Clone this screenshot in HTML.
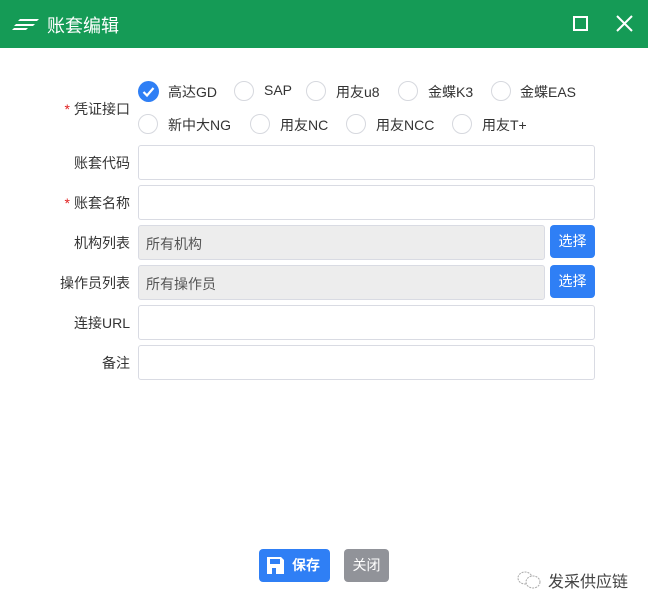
<!DOCTYPE html>
<html><head><meta charset="utf-8"><style>
*{box-sizing:border-box;margin:0;padding:0}
body{width:648px;height:607px;background:#fff;font-family:"Liberation Sans","Noto Sans CJK SC",sans-serif;font-size:14px;color:#333;position:relative;overflow:hidden}
.hd{position:absolute;left:0;top:0;width:648px;height:48px;background:#159b56;color:#fff}
.hd .t{position:absolute;left:47px;top:12px;font-size:18px}
.a{position:absolute}
.lbl{position:absolute;right:518px;width:120px;text-align:right;font-size:14px;color:#333}
.star{color:#e02020;margin-right:4px}
.in{position:absolute;left:138px;width:457px;height:35px;border:1px solid #d9dbe3;border-radius:3px;background:#fff}
.g{width:407px;background:#ededed;color:#555;padding:8px 7px}
.sel{position:absolute;left:550px;width:45px;height:33px;background:#2f7ff5;color:#fff;border-radius:4px;text-align:center;line-height:33px;font-size:14px}
.r{position:absolute;width:20px;height:20px;border:1px solid #d6d8de;border-radius:50%}
.rl{position:absolute;font-size:14px;color:#333}
</style></head><body>
<div class="hd">
<svg class="a" style="left:12px;top:17px" width="28" height="14" viewBox="0 0 28 14"><path d="M8 2 L27 2 L25 4 L6 4Z M4 7 L23 7 L21 9 L2 9Z M2 11 L16 11 L14 13 L0 13Z" fill="#fff"/></svg>
<div class="t">账套编辑</div>
<div class="a" style="left:573px;top:16px;width:15px;height:15px;border:2px solid #fff"></div>
<svg class="a" style="left:616px;top:15px" width="17" height="17"><path d="M1 1L16 16M16 1L1 16" stroke="#fff" stroke-width="2"/></svg>
</div>

<div class="lbl" style="top:99px"><span class="star">*</span>凭证接口</div>
<svg class="a" style="left:138px;top:81px" width="21" height="21"><circle cx="10.5" cy="10.5" r="10.5" fill="#2f7ff5"/><path d="M5.5 11 L9 14.5 L15.5 7" stroke="#fff" stroke-width="2.2" fill="none"/></svg>
<div class="rl" style="left:168px;top:82px">高达GD</div>
<div class="r" style="left:234px;top:81px"></div><div class="rl" style="left:264px;top:82px">SAP</div>
<div class="r" style="left:306px;top:81px"></div><div class="rl" style="left:336px;top:82px">用友u8</div>
<div class="r" style="left:398px;top:81px"></div><div class="rl" style="left:428px;top:82px">金蝶K3</div>
<div class="r" style="left:491px;top:81px"></div><div class="rl" style="left:520px;top:82px">金蝶EAS</div>
<div class="r" style="left:138px;top:114px"></div><div class="rl" style="left:168px;top:115px">新中大NG</div>
<div class="r" style="left:250px;top:114px"></div><div class="rl" style="left:280px;top:115px">用友NC</div>
<div class="r" style="left:346px;top:114px"></div><div class="rl" style="left:376px;top:115px">用友NCC</div>
<div class="r" style="left:452px;top:114px"></div><div class="rl" style="left:482px;top:115px">用友T+</div>

<div class="lbl" style="top:153px">账套代码</div><div class="in" style="top:145px"></div>
<div class="lbl" style="top:193px"><span class="star">*</span>账套名称</div><div class="in" style="top:185px"></div>
<div class="lbl" style="top:233px">机构列表</div><div class="in g" style="top:225px">所有机构</div><div class="sel" style="top:225px">选择</div>
<div class="lbl" style="top:273px">操作员列表</div><div class="in g" style="top:265px">所有操作员</div><div class="sel" style="top:265px">选择</div>
<div class="lbl" style="top:313px">连接URL</div><div class="in" style="top:305px"></div>
<div class="lbl" style="top:353px">备注</div><div class="in" style="top:345px"></div>

<div class="a" style="left:259px;top:549px;width:71px;height:33px;background:#2f7ff5;border-radius:4px;color:#fff;line-height:33px;padding-left:33px;font-size:14px;font-weight:bold">保存
<svg class="a" style="left:8px;top:8px" width="17" height="17" viewBox="0 0 17 17"><path d="M0 0H14L17 3V17H0Z" fill="#fff"/><rect x="3" y="2" width="10" height="5" fill="#2f7ff5"/><rect x="5" y="11" width="4" height="6" fill="#2f7ff5"/></svg></div>
<div class="a" style="left:344px;top:549px;width:45px;height:33px;background:#919399;border-radius:4px;color:#fff;line-height:33px;text-align:center;font-size:14px">关闭</div>

<svg class="a" style="left:516px;top:570px" width="26" height="20"><ellipse cx="9" cy="8" rx="7" ry="6" fill="none" stroke="#aaa" stroke-dasharray="2 1"/><ellipse cx="17" cy="12" rx="7" ry="6" fill="#fff" stroke="#aaa" stroke-dasharray="2 1"/></svg>
<div class="a" style="left:548px;top:568px;font-size:16px;color:#444">发采供应链</div>
</body></html>
